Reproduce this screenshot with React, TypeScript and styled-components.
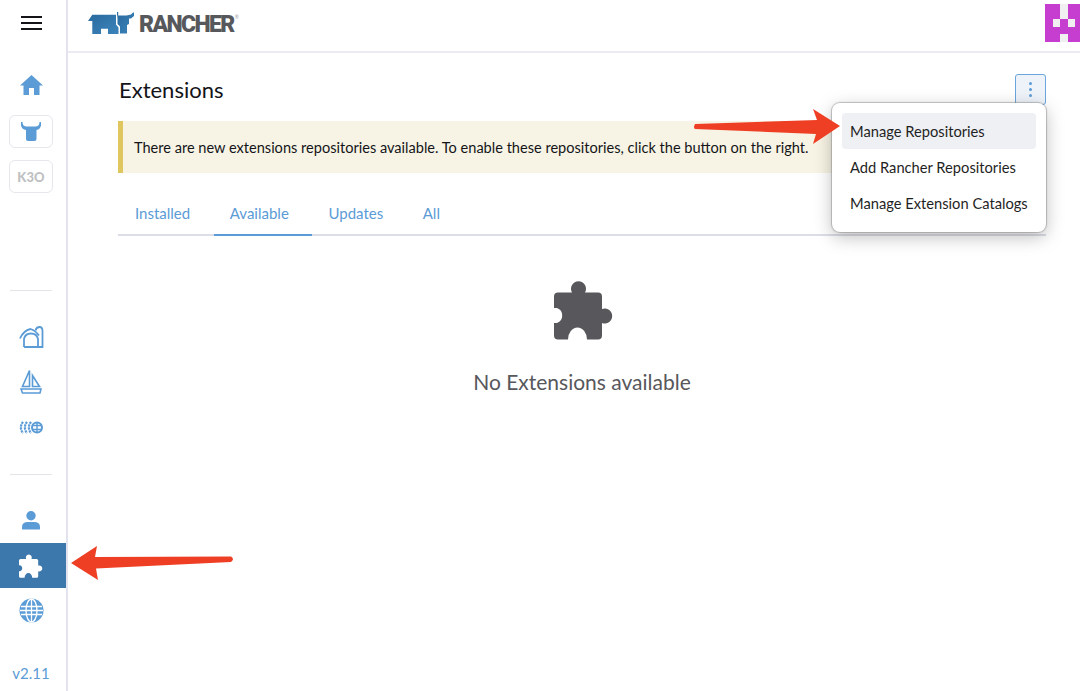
import React from 'react';
import styled, { createGlobalStyle } from 'styled-components';

const GlobalStyle = createGlobalStyle`
  html, body {
    margin: 0;
    padding: 0;
    height: 100%;
    background: #fff;
    overflow: hidden;
  }
  body {
    font-family: Lato, "Open Sans", sans-serif;
    color: #141419;
  }
  * {
    box-sizing: border-box;
  }
`;

const Page = styled.div`
  position: relative;
  display: flex;
  width: 1080px;
  height: 691px;
  overflow: hidden;
`;

const SideNav = styled.nav`
  display: flex;
  flex-direction: column;
  align-items: center;
  flex: 0 0 68px;
  height: 691px;
  padding-right: 4px;
  border-right: 2px solid #e2e3ee;
`;

const MenuButton = styled.div`
  display: flex;
  flex-direction: column;
  justify-content: center;
  gap: 4px;
  height: 62px;
  padding-bottom: 16px;
`;

const MenuLine = styled.span`
  display: block;
  width: 21px;
  height: 2px;
  background: #141419;
`;

const NavItem = styled.div<{ $active?: boolean }>`
  display: flex;
  align-items: center;
  justify-content: center;
  align-self: stretch;
  flex: 0 0 45px;
  margin-right: -4px;
  padding-right: 4px;
  color: ${(p) => (p.$active ? '#fff' : '#5b9bd6')};
  background: ${(p) => (p.$active ? '#3d78ad' : 'transparent')};
`;

const ClusterButton = styled.div<{ $top: number; $muted?: boolean }>`
  display: flex;
  align-items: center;
  justify-content: center;
  flex: 0 0 33px;
  width: 44px;
  margin-top: ${(p) => p.$top}px;
  border: 1px solid #e6e6ee;
  border-radius: 6px;
  color: ${(p) => (p.$muted ? '#c0c0c2' : '#5b9bd6')};
  font-size: 13px;
  font-weight: 900;
  letter-spacing: 0.2px;
`;

const NavDivider = styled.hr<{ $top: number; $bottom: number }>`
  flex: 0 0 1px;
  width: 42px;
  margin: ${(p) => p.$top}px 0 ${(p) => p.$bottom}px;
  border: 0;
  background: #e3e3e8;
`;

const Version = styled.div`
  margin-top: 30px;
  color: #5b9bd6;
  font-size: 15px;
  line-height: 20px;
`;

const Body = styled.div`
  display: flex;
  flex-direction: column;
  flex: 1;
  min-width: 0;
`;

const TopBar = styled.header`
  display: flex;
  align-items: flex-start;
  justify-content: space-between;
  flex: 0 0 53px;
  padding: 4px 0 0 20px;
  border-bottom: 2px solid #ebebf1;
`;

const Brand = styled.div`
  display: flex;
  align-items: center;
  gap: 2px;
  height: 38px;
`;

const BrandName = styled.span`
  margin-top: 3px;
  color: #57585c;
  font-family: Roboto, sans-serif;
  font-size: 23px;
  font-weight: 900;
  letter-spacing: -1.6px;
  line-height: 35px;
`;

const BrandMark = styled.sup`
  margin: -12px 0 0 -1px;
  color: #a0a0a4;
  font-size: 5px;
  line-height: 6px;
`;

const Content = styled.main`
  display: flex;
  flex-direction: column;
  padding: 21px 34px 0 50px;
`;

const TitleRow = styled.div`
  display: flex;
  align-items: center;
  justify-content: space-between;
  height: 30px;
`;

const Title = styled.h1`
  margin: 1px 0 0 1px;
  font-size: 22px;
  font-weight: 400;
  line-height: 30px;
`;

const KebabButton = styled.button`
  display: flex;
  flex-direction: column;
  align-items: center;
  justify-content: center;
  gap: 3px;
  width: 31px;
  height: 31px;
  padding: 0;
  border: 1px solid #6aa6dc;
  border-radius: 3px;
  background: #edf3f9;
`;

const KebabDot = styled.span`
  display: block;
  width: 3px;
  height: 3px;
  border-radius: 50%;
  background: #5b9bd6;
`;

const Banner = styled.div`
  display: flex;
  align-items: center;
  height: 52px;
  margin-top: 17px;
  padding-left: 11px;
  border-left: 5px solid #dfc65e;
  background: #f7f4e5;
  font-size: 14.57px;
`;

const Tabs = styled.div`
  display: flex;
  height: 41px;
  margin-top: 22px;
  padding-left: 1px;
  border-bottom: 2px solid #dcdee7;
`;

const Tab = styled.div<{ $active?: boolean }>`
  height: 41px;
  padding: 0 23.6px 0 16px;
  color: #5b9bd6;
  font-size: 15px;
  line-height: 37px;
  border-bottom: 2px solid ${(p) => (p.$active ? '#5b9bd6' : 'transparent')};
`;

const EmptyState = styled.div`
  display: flex;
  flex-direction: column;
  align-items: center;
  margin-top: 44px;
  color: #57575c;
`;

const EmptyIcon = styled.div`
  display: flex;
  height: 60px;
  margin-left: 3px;
`;

const EmptyText = styled.div`
  margin-top: 27px;
  font-size: 21px;
  line-height: 30px;
`;

const ActionMenu = styled.div`
  position: absolute;
  top: 103px;
  left: 832px;
  display: flex;
  flex-direction: column;
  width: 214px;
  padding: 10px 10px 11px;
  border-radius: 8px;
  background: #fff;
  box-shadow: 0 0 1px 1px rgba(120, 120, 125, 0.45), 0 5px 18px rgba(0, 0, 0, 0.26);
`;

const ActionItem = styled.div<{ $hover?: boolean }>`
  height: 36px;
  padding-left: 8px;
  border-radius: 4px;
  background: ${(p) => (p.$hover ? '#eef0f4' : 'transparent')};
  color: #1f1f24;
  font-size: 14.7px;
  line-height: 36px;
`;

const Arrow = styled.svg<{ $left: number; $top: number }>`
  position: absolute;
  left: ${(p) => p.$left}px;
  top: ${(p) => p.$top}px;
`;

const BoatSvg = styled.svg`
  margin-bottom: 3px;
`;

const BarnSvg = styled.svg`
  margin-bottom: 2px;
`;

const PUZZLE =
  'M4 12.5H18A7.500 7.500 0 1 1 31 12.500H44A4 4 0 0 1 48 16.500V29A7.500 7.500 0 1 1 48 43V55.500A4 4 0 0 1 44 59.500H33A9.500 12 0 0 0 14 59.500H4A4 4 0 0 1 0 55.500V43H3A8 8 0 0 0 3 28H0V16.500A4 4 0 0 1 4 12.500Z';

const Puzzle = ({ size }: { size: number }) => (
  <svg width={size} height={size} viewBox="0 0 60 60" fill="currentColor">
    <path d={PUZZLE} />
  </svg>
);

const RancherLogo = () => (
  <svg width="49" height="24" viewBox="0 0 49 24">
    <defs>
      <linearGradient id="rancher-blue" x1="0" y1="0" x2="1" y2="1">
        <stop offset="0" stopColor="#2a6a9e" />
        <stop offset="1" stopColor="#3b84bb" />
      </linearGradient>
    </defs>
    <path
      fill="url(#rancher-blue)"
      d="M0 10 4.300 3.700H28V13.500L30.500 16.500V23H20V17.700H13V23H4.300V10Z"
    />
    <path
      fill="url(#rancher-blue)"
      d="M29 1H30.200V4.500H38.500L43 3.500 45 1.500H46V5L43 7.500H41V13L39 14V22.500H32V15.500L29.500 13V7L29 3Z"
    />
  </svg>
);

const HomeIcon = () => (
  <svg width="23" height="20" viewBox="0 0 23 20" fill="currentColor">
    <path d="M11.5 0 23 10.5H19.5V20H14V13H9V20H3.5V10.5H0Z" />
  </svg>
);

const BullIcon = () => (
  <svg width="20" height="19" viewBox="0 0 20 19" fill="currentColor">
    <path d="M0 0H1.500Q1.500 4 5 4.500H15Q18.500 4 18.500 0H20V3.500Q19 7.500 15.500 8V17Q15.500 19 13.500 19H7Q5 19 5 17V8Q1 7.500 0 3.500Z" />
  </svg>
);

const BarnIcon = () => (
  <BarnSvg width="25" height="22" viewBox="0 0 25 22" fill="none" stroke="currentColor" strokeWidth="1.800">
    <path d="M1 12.500Q4.500 4.500 11.500 3 16.500 4.500 20 9.500" />
    <path d="M16.500 4.500Q17.500 1 20.500 1 23.500 1 23.500 5V21H5" />
    <path d="M5 21V13Q6 7.500 12 7.500 18 7.500 19 13V21" />
  </BarnSvg>
);

const BoatIcon = () => (
  <BoatSvg width="22" height="25" viewBox="0 0 22 25" fill="none" stroke="currentColor" strokeWidth="1.6">
    <path d="M9.5 1.5V17.5H2.5Z" />
    <path d="M12.5 6.5 19.5 17.5H12.5Z" />
    <path d="M1 20H21L20 24H2.5Z" />
  </BoatSvg>
);

const FleetIcon = () => (
  <svg width="24" height="13" viewBox="0 0 24 13" fill="none" stroke="currentColor">
    <path strokeWidth="2.200" strokeDasharray="2.300 0.700" d="M4 .8Q-.2 6.500 4 12.200M8 .8Q3.800 6.500 8 12.200M12 .8Q7.800 6.500 12 12.200" />
    <circle cx="18" cy="6.500" r="5" strokeWidth="2" />
    <path strokeWidth="1.400" d="M18 1V12M13 4.500H23M13 8.500H23" />
  </svg>
);

const UserIcon = () => (
  <svg width="18" height="19" viewBox="0 0 18 19" fill="currentColor">
    <circle cx="9" cy="4.700" r="4.700" />
    <path d="M0 18V16Q0 11 6 11H12Q18 11 18 16V18Q18 18.500 17 18.500H1Q0 18.500 0 18Z" />
  </svg>
);

const GlobeIcon = () => (
  <svg width="25" height="25" viewBox="0 0 25 25">
    <circle cx="12.500" cy="12.500" r="12" fill="currentColor" />
    <g fill="none" stroke="#fff" strokeWidth="1.300">
      <path d="M2 8.500H23M1 12.500H24M2 16.500H23" />
      <path d="M12.500 1V24" />
      <ellipse cx="12.500" cy="12.500" rx="5.500" ry="11.500" />
    </g>
  </svg>
);

const Identicon = () => (
  <svg width="35" height="38" viewBox="0 0 35 38">
    <rect width="35" height="38" fill="#c63ecf" />
    <g fill="#f0f0f0">
      <rect x="15" y="0" width="8" height="15" />
      <rect x="8" y="15" width="7" height="8" />
      <rect x="23" y="15" width="7" height="8" />
      <rect x="15" y="30" width="8" height="8" />
    </g>
  </svg>
);

const App = () => (
  <>
    <GlobalStyle />
    <Page>
      <SideNav>
        <MenuButton>
          <MenuLine />
          <MenuLine />
          <MenuLine />
        </MenuButton>
        <NavItem>
          <HomeIcon />
        </NavItem>
        <ClusterButton $top={8}>
          <BullIcon />
        </ClusterButton>
        <ClusterButton $top={12} $muted>
          K3O
        </ClusterButton>
        <NavDivider $top={97} $bottom={24} />
        <NavItem>
          <BarnIcon />
        </NavItem>
        <NavItem>
          <BoatIcon />
        </NavItem>
        <NavItem>
          <FleetIcon />
        </NavItem>
        <NavDivider $top={24} $bottom={23} />
        <NavItem>
          <UserIcon />
        </NavItem>
        <NavItem $active>
          <Puzzle size={24} />
        </NavItem>
        <NavItem>
          <GlobeIcon />
        </NavItem>
        <Version>v2.11</Version>
      </SideNav>
      <Body>
        <TopBar>
          <Brand>
            <RancherLogo />
            <BrandName>RANCHER</BrandName>
            <BrandMark>®</BrandMark>
          </Brand>
          <Identicon />
        </TopBar>
        <Content>
          <TitleRow>
            <Title>Extensions</Title>
            <KebabButton>
              <KebabDot />
              <KebabDot />
              <KebabDot />
            </KebabButton>
          </TitleRow>
          <Banner>
            There are new extensions repositories available. To enable these repositories, click the button on the right.
          </Banner>
          <Tabs>
            <Tab>Installed</Tab>
            <Tab $active>Available</Tab>
            <Tab>Updates</Tab>
            <Tab>All</Tab>
          </Tabs>
          <EmptyState>
            <EmptyIcon>
              <Puzzle size={60} />
            </EmptyIcon>
            <EmptyText>No Extensions available</EmptyText>
          </EmptyState>
        </Content>
      </Body>
      <ActionMenu>
        <ActionItem $hover>Manage Repositories</ActionItem>
        <ActionItem>Add Rancher Repositories</ActionItem>
        <ActionItem>Manage Extension Catalogs</ActionItem>
      </ActionMenu>
      <Arrow $left={692} $top={108} width={150} height={38} viewBox="0 0 150 38" fill="#ee3f24">
        <path d="M148 18 121 36 124 26 3 21Q1 19.500 3 16L125 12 121 1Z" />
      </Arrow>
      <Arrow $left={70} $top={544} width={166} height={38} viewBox="0 0 166 38" fill="#ee3f24">
        <path d="M1 19 27 2 25 13 161 12.500Q165 15 161 18L26 24.500 28 36Z" />
      </Arrow>
    </Page>
  </>
);

export default App;
